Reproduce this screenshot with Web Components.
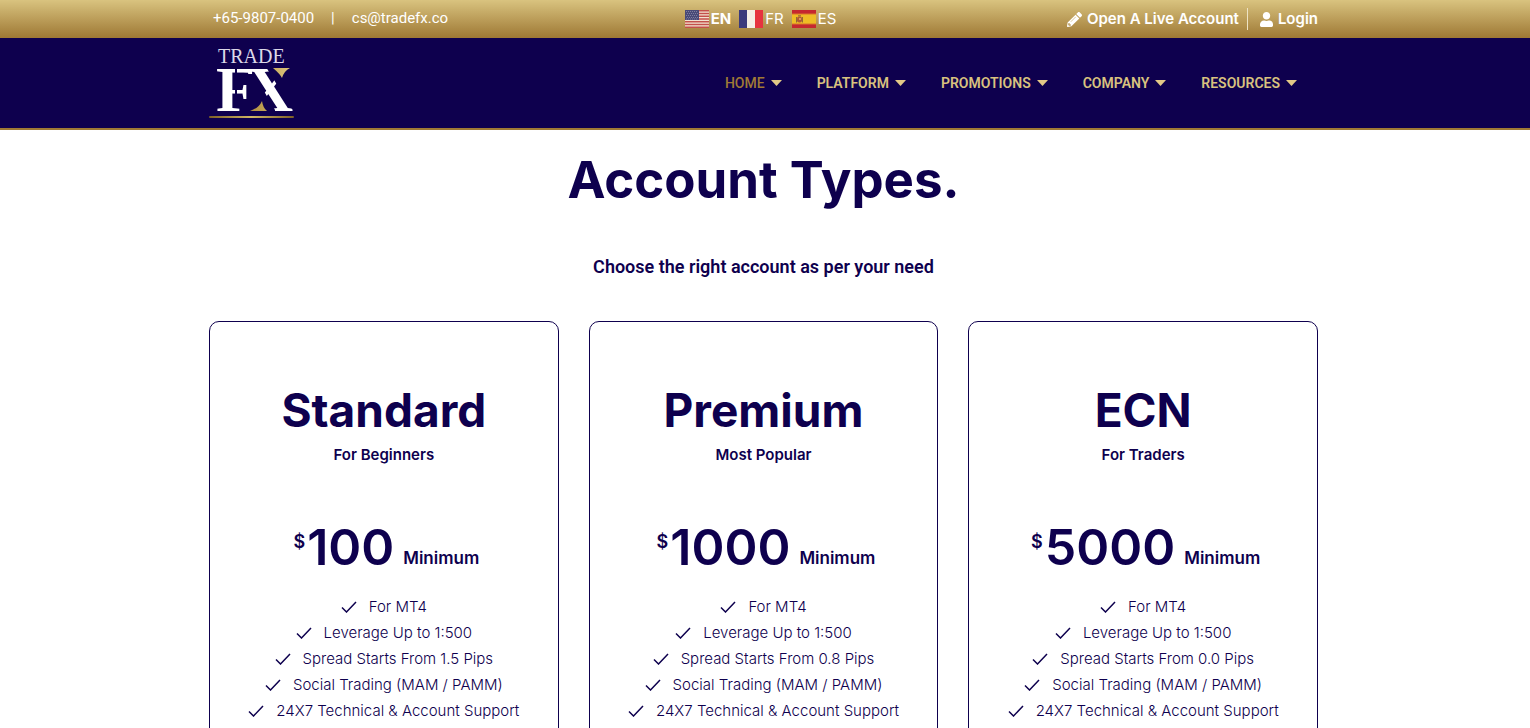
<!DOCTYPE html>
<html lang="en">
<head>
<meta charset="utf-8">
<meta name="viewport" content="width=device-width, initial-scale=1">
<title>TradeFX – Account Types</title>
<style>
  :root {
    --navy: #0e004e;
    --gold: #d9c27f;
    --bronze: #a07a35;
    --shell: 1109px;
    --display: Inter, "Open Sans", sans-serif;
    --body: Roboto, "Open Sans", sans-serif;
  }
  body { margin: 0; background: #fff; color: var(--navy); font-family: var(--body); }
</style>
</head>
<body>
<top-bar></top-bar>
<site-nav>
  <nav-item current>HOME</nav-item>
  <nav-item>PLATFORM</nav-item>
  <nav-item>PROMOTIONS</nav-item>
  <nav-item>COMPANY</nav-item>
  <nav-item>RESOURCES</nav-item>
</site-nav>
<account-section>
  <span slot="title">Account Types.</span>
  <span slot="lead">Choose the right account as per your need</span>
  <price-card amount="100" spread="1.5"><span slot="name">Standard</span><span slot="tag">For Beginners</span></price-card>
  <price-card amount="1000" spread="0.8"><span slot="name">Premium</span><span slot="tag">Most Popular</span></price-card>
  <price-card amount="5000" spread="0.0"><span slot="name">ECN</span><span slot="tag">For Traders</span></price-card>
</account-section>
<script>
const define = (name, html) => {
  customElements.define(name, class extends HTMLElement {
    constructor() {
      super();
      this.attachShadow({ mode: 'open' }).innerHTML = typeof html === 'function' ? html(this) : html;
    }
  });
};

const flags = {
  us: `<svg viewBox="0 0 24 18" width="24" height="18" aria-hidden="true"><rect width="24" height="18" fill="#f2e3d2"/>
    <path d="M0 .7h24M0 3.5h24M0 6.2h24M0 9h24M0 11.8h24M0 14.5h24M0 17.3h24" stroke="#c4504b" stroke-width="1.4"/>
    <rect width="14" height="10" fill="#484a78"/><path d="M1 1.5h12M2 3.5h11M1 5.5h12M2 7.500h11M1 9h12" stroke="#8d8ba6" stroke-width=".8" stroke-dasharray="1 1"/></svg>`,
  fr: `<svg viewBox="0 0 24 18" width="24" height="18" aria-hidden="true"><rect width="24" height="18" fill="#f5efe6"/><rect width="8" height="18" fill="#3b3a7c"/><rect x="16" width="8" height="18" fill="#e6343f"/></svg>`,
  es: `<svg viewBox="0 0 24 18" width="24" height="18" aria-hidden="true"><rect width="24" height="18" fill="#c5282f"/><rect y="4" width="24" height="10" fill="#eebd25"/><path d="M0 4h24M0 14h24" stroke="#d9752a"/>
    <rect x="5" y="6.500" width="5" height="6" rx="2" fill="#b05a35"/><path d="M4.500 7v5.500M10.500 7v5.500M6 5.800h3" stroke="#8f6a35"/><rect x="7" y="8" width="2" height="2" fill="#d99a5b"/></svg>`
};

define('top-bar', `
<style>
  :host { display: block; padding-right: 3px; background: linear-gradient(#d9c37f, #9e7834); color: #fff; }
  .shell { max-width: var(--shell); min-height: 38px; margin: 0 auto; display: grid; grid-template-columns: 1fr auto 1fr; align-items: center; }
  a { color: inherit; text-decoration: none; }
  .contact { display: flex; gap: 17px; padding: 0 0 2px 4px; font: 400 15px/20px var(--body); }
  .langs { display: flex; gap: 8px; padding-right: 6px; font: 400 15px/20px var(--display); }
  .langs a { display: flex; align-items: center; gap: 2px; }
  .langs [aria-current] { font-weight: 700; }
  .account { display: flex; justify-content: flex-end; align-items: center; font: 600 15px/22px var(--display); }
  .account a { display: flex; align-items: center; gap: 5px; }
  .account a + a { margin-left: 8px; padding-left: 12px; border-left: 1px solid #eee3c4; }
  svg { display: block; flex: none; }
</style>
<div class="shell">
  <div class="contact"><a href="tel:+6598070400">+65-9807-0400</a><span>|</span><a href="mailto:cs@tradefx.co">cs@tradefx.co</a></div>
  <div class="langs"><a href="#en" aria-current="true">${flags.us}EN</a><a href="#fr">${flags.fr}FR</a><a href="#es">${flags.es}ES</a></div>
  <div class="account">
    <a href="#open"><svg width="15" height="15" viewBox="0 0 512 512" aria-hidden="true"><path fill="currentColor" d="M497.900 142.100l-46.100 46.100c-4.700 4.700-12.300 4.700-17 0l-111-111c-4.700-4.700-4.700-12.300 0-17l46.100-46.100c18.700-18.700 49.100-18.700 67.900 0l60.100 60.100c18.800 18.700 18.800 49.100 0 67.900zM284.200 99.800L21.600 362.400.4 483.900c-2.900 16.400 11.400 30.600 27.800 27.800l121.500-21.300 262.600-262.600c4.700-4.700 4.700-12.300 0-17l-111-111c-4.800-4.700-12.400-4.700-17.100 0zM88 424h48v36.300l-64.500 11.300-31.100-31.100L51.700 376H88v48z"/><path d="M130 334L298 166" stroke="#c9b06c" stroke-width="24"/></svg>Open A Live Account</a>
    <a href="#login"><svg width="13" height="15" viewBox="0 0 448 512" aria-hidden="true"><path fill="currentColor" d="M224 256c70.700 0 128-57.300 128-128S294.700 0 224 0 96 57.300 96 128s57.300 128 128 128zm89.600 32h-16.700c-22.200 10.200-46.900 16-72.900 16s-50.600-5.800-72.900-16h-16.700C60.200 288 0 348.200 0 422.400V464c0 26.500 21.500 48 48 48h352c26.500 0 48-21.500 48-48v-41.600c0-74.200-60.200-134.400-134.400-134.400z"/></svg>Login</a>
  </div>
</div>`);

define('brand-logo', `
<style>:host { display: block; } a, svg { display: block; }</style>
<a href="#home" aria-label="Trade FX">
<svg width="86" height="86" viewBox="0 0 86 86">
  <defs>
    <linearGradient id="shard"><stop stop-color="#b08d3e"/><stop offset="1" stop-color="#dcc57c"/></linearGradient>
    <linearGradient id="rule"><stop stop-color="#7d5f25"/><stop offset=".5" stop-color="#d3b866"/><stop offset="1" stop-color="#7d5f25"/></linearGradient>
  </defs>
  <text x="7" y="71" font-family="Liberation Serif, serif" font-weight="700" font-size="64" fill="#fff">F<tspan dx="-8">X</tspan></text>
  <!-- stencil cuts, then the two gold shards of the mark -->
  <g fill="#0e004e">
    <rect x="26" y="27" width="2" height="36"/>
    <path d="M57 27H86V71L83 69zM38 34H45L66 70V73H38z"/>
  </g>
  <path d="M64 28H81Q75 31 73 38Q71 34 64 28zM41 71Q50 68 53 61Q54 68 58 71z" fill="url(#shard)"/>
  <text x="9" y="23" font-family="Liberation Serif, serif" font-size="20" fill="#dcd8e8">TRADE</text>
  <rect x="0" y="76" width="85" height="2" rx="1" fill="url(#rule)"/>
</svg></a>`);

define('site-nav', `
<style>
  :host { display: block; padding-right: 3px; background: var(--navy); border-bottom: 2px solid var(--bronze); }
  .shell { max-width: var(--shell); min-height: 90px; margin: 0 auto; display: flex; align-items: center; justify-content: space-between; }
  nav { display: flex; gap: 35px; padding-right: 21px; }
</style>
<div class="shell"><brand-logo></brand-logo><nav aria-label="Main"><slot></slot></nav></div>`);

define('nav-item', `
<style>
  :host { display: block; color: var(--gold); }
  button { all: unset; display: flex; align-items: center; gap: 6px; font: 600 14px/20px var(--body); cursor: pointer; }
  :host([current]) span { color: var(--bronze); font-weight: 500; }
</style>
<button type="button" aria-haspopup="true"><span><slot></slot></span><svg width="11" height="6" viewBox="0 0 11 6" aria-hidden="true"><path d="M0 0h11L5.500 6z" fill="#e3c987"/></svg></button>`);

define('account-section', `
<style>
  :host { display: block; padding-right: 3px; text-align: center; }
  .shell { max-width: var(--shell); margin: 0 auto; }
  h1 { margin: 0; padding-top: 18px; font: 700 51px/64px var(--display); }
  p { margin: 0; padding: 43px 0 42px; font: 600 18px/24px var(--body); }
  .cards { display: grid; grid-template-columns: repeat(3, minmax(0, 1fr)); gap: 30px; }
</style>
<div class="shell">
<h1><slot name="title"></slot></h1>
<p><slot name="lead"></slot></p>
<div class="cards"><slot></slot></div>
</div>`);

const tick = `<svg width="16" height="12" viewBox="0 0 16 12" aria-hidden="true"><path d="M1 6.500L5.500 11 15 1" fill="none" stroke="currentColor" stroke-width="1.500"/></svg>`;

define('price-card', el => {
  const features = ['For MT4', 'Leverage Up to 1:500', `Spread Starts From ${el.getAttribute('spread')} Pips`,
    'Social Trading (MAM / PAMM)', '24X7 Technical & Account Support'];
  return `
<style>
  :host { display: block; box-sizing: border-box; padding: 56px 20px 40px; border: 1px solid var(--navy); border-radius: 10px; font-family: var(--display); }
  h2 { margin: 0; font-size: 46px; line-height: 64px; font-weight: 700; }
  .tag { margin: 0; font-size: 15px; line-height: 26px; font-weight: 600; }
  .price { display: flex; justify-content: center; align-items: flex-start; padding: 48px 0 16px 5px; font-weight: 600; }
  .cur { font-size: 18px; line-height: 24px; padding: 14px 2px 0 0; }
  .num { font-size: 50px; line-height: 62px; }
  .unit { font-size: 17px; line-height: 24px; padding: 30px 0 0 9px; }
  ul { list-style: none; margin: 0; padding: 0; font-size: 15px; line-height: 26px; font-weight: 300; }
  li { display: flex; justify-content: center; align-items: center; gap: 12px; }
</style>
<h2><slot name="name"></slot></h2>
<p class="tag"><slot name="tag"></slot></p>
<div class="price"><span class="cur">$</span><span class="num">${el.getAttribute('amount')}</span><span class="unit">Minimum</span></div>
<ul>${features.map(f => `<li>${tick}<span>${f.replace('&', '&amp;')}</span></li>`).join('')}</ul>`;
});
</script>
</body>
</html>
